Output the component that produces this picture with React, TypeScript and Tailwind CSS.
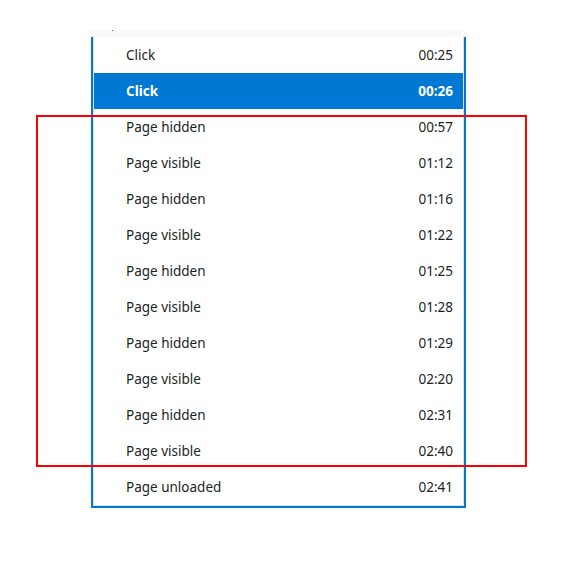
import React from 'react';

type Row = { label: string; time: string; selected?: boolean };

const rows: Row[] = [
  { label: 'Click', time: '00:25' },
  { label: 'Click', time: '00:26', selected: true },
  { label: 'Page hidden', time: '00:57' },
  { label: 'Page visible', time: '01:12' },
  { label: 'Page hidden', time: '01:16' },
  { label: 'Page visible', time: '01:22' },
  { label: 'Page hidden', time: '01:25' },
  { label: 'Page visible', time: '01:28' },
  { label: 'Page hidden', time: '01:29' },
  { label: 'Page visible', time: '02:20' },
  { label: 'Page hidden', time: '02:31' },
  { label: 'Page visible', time: '02:40' },
  { label: 'Page unloaded', time: '02:41' },
];

export default function App() {
  return (
    <div
      className="relative w-[583px] h-[564px] bg-white text-[#201f1e]"
      style={{ fontFamily: '"Noto Sans", "Open Sans", sans-serif' }}
    >
      <div className="pt-[30px] pl-[90px] w-[466px]">
        {/* Sticky header strip */}
        <div className="relative h-[7px] bg-[#faf9f8]">
          <span className="absolute left-[22px] top-0 w-px h-px bg-[#0078d4]" />
        </div>

        {/* Event list */}
        <div className="ml-px w-[375px] border-x-2 border-b-2 border-[#0078d4]">
          <div className="border-x border-b border-[#e1dfdd]">
            {rows.map((row, i) => (
              <div
                key={i}
                className={`flex items-center justify-between h-9 pl-[32px] pr-[10px] text-[13.5px] ${
                  row.selected ? 'bg-[#0078d4] text-white font-bold' : ''
                }`}
              >
                <span>{row.label}</span>
                <span>{row.time}</span>
              </div>
            ))}
          </div>
        </div>
      </div>

      {/* Highlight annotation */}
      <div className="absolute left-[36px] top-[115px] w-[491px] h-[352px] border-2 border-[#ff0000] pointer-events-none" />
    </div>
  );
}
